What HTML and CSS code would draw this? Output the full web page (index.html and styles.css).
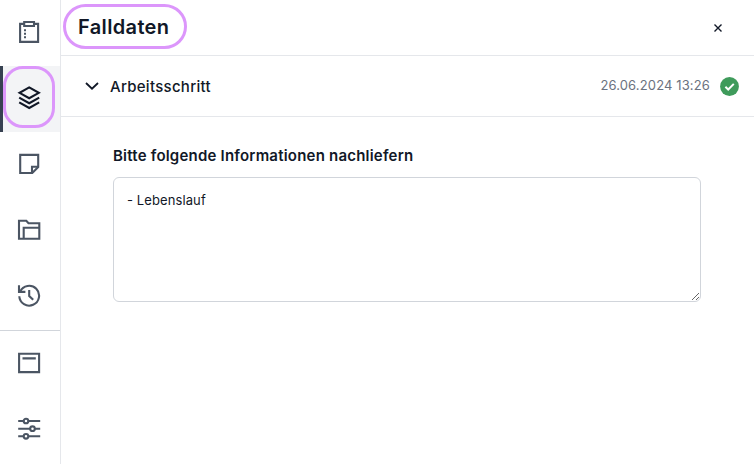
FILE: index.html
```html
<!DOCTYPE html>
<html lang="de">
<head>
    <meta charset="UTF-8" />
    <title>Falldaten</title>
    <link rel="stylesheet" href="styles.css">
</head>
<body>
<div class="app">
    <nav class="sidebar">
        <a class="nav-item" title="Aufgaben">
            <svg viewBox="0 0 24 24">
                <path d="M7 3.9H3.1v18h18V3.9H17" />
                <path d="M7.2 2h9.8v4H7.2z" />
                <path d="M7 10.3h2M7 13.8h2M7 17.3h2" />
            </svg>
        </a>
        <a class="nav-item active" title="Falldaten">
            <svg viewBox="0 0 24 24">
                <path d="M12.2 1.4L21.8 6.8L12.2 12.2L2.6 6.8z" />
                <path d="M2.2 11.6L12.2 17.2L22.2 11.6M2.2 16.4L12.2 22L22.2 16.4" />
            </svg>
            <span class="highlight highlight-nav"></span>
        </a>
        <a class="nav-item" title="Notizen">
            <svg viewBox="0 0 24 24">
                <path d="M3.2 2.9h18v12.2l-5.9 5.9H3.2z" />
                <path d="M15 21v-6.2h6.2" />
            </svg>
        </a>
        <a class="nav-item" title="Dokumente">
            <svg viewBox="0 0 24 24">
                <path d="M2 20.8V2.8h7.3l2.2 2.5H22.3v15.5z" />
                <path d="M6.7 20.8V9.8h15.6" />
            </svg>
        </a>
        <a class="nav-item" title="Verlauf">
            <svg viewBox="0 0 24 24">
                <path d="M2.3 12.2A9.9 9.9 0 1 0 3.2 7.6" />
                <path d="M2 1.3v6.6h6.4M12.2 6v6l4 3.8" />
            </svg>
        </a>
        <div class="divider"></div>
        <a class="nav-item" title="Ansicht">
            <svg viewBox="0 0 24 24">
                <path d="M2.1 2.8h20v18.3h-20zM5.5 7.4h13.3" />
            </svg>
        </a>
        <a class="nav-item" title="Einstellungen">
            <svg viewBox="0 0 24 24">
                <path d="M1.2 4h5.4M11.4 4h11.8M1.2 11.7h11.9M17.9 11.7h5.3M1.2 19.3h5.4M11.4 19.3h11.8" />
                <circle cx="9" cy="4" r="2.3" />
                <circle cx="15.5" cy="11.7" r="2.3" />
                <circle cx="9" cy="19.3" r="2.3" />
            </svg>
        </a>
    </nav>

    <main class="panel">
        <header class="panel-header">
            <h1>Falldaten<span class="highlight highlight-title"></span></h1>
            <button class="close" aria-label="Schließen">
                <svg viewBox="0 0 10 10"><path d="M1.5 1.5l7 7M8.5 1.5l-7 7" /></svg>
            </button>
        </header>

        <div class="step">
            <svg class="chevron" viewBox="0 0 14 8"><path d="M1 1l6 5.7L13 1" /></svg>
            <span class="step-title">Arbeitsschritt</span>
            <span class="step-date">26.06.2024 13:26</span>
            <svg class="check" viewBox="0 0 19 19">
                <circle cx="9.5" cy="9.5" r="9.4" />
                <path d="M5.4 9.8l2.8 2.7 5.6-5.6" />
            </svg>
        </div>

        <form class="step-form">
            <label for="nachliefern">Bitte folgende Informationen nachliefern</label>
            <textarea id="nachliefern" spellcheck="false">- Lebenslauf</textarea>
        </form>
    </main>
</div>
</body>
</html>
```
FILE: styles.css
```css
* {
    box-sizing: border-box;
}

body {
    margin: 0;
    font-family: Inter, "Liberation Sans", sans-serif;
    background-color: #ffffff;
    color: #111827;
}

svg {
    display: block;
    fill: none;
    stroke: currentColor;
}

.app {
    display: flex;
    height: 100vh;
    overflow: hidden;
}

.sidebar {
    flex: none;
    width: 61px;
    border-right: 1px solid #e5e7eb;
    color: #4b5563;
}

.nav-item {
    position: relative;
    display: flex;
    height: 66px;
    padding: 20px 0 0 14px;
    border-left: 3px solid transparent;
}

.nav-item svg {
    width: 24px;
    height: 24px;
    stroke-width: 2.1;
}

.nav-item.active {
    background-color: #f3f4f6;
    border-left-color: #374151;
    color: #111827;
}

.divider {
    height: 1px;
    background-color: #d1d5db;
}

.highlight {
    position: absolute;
    border: 3px solid #dc96fb;
}

.highlight-nav {
    left: 0;
    top: 0;
    width: 52px;
    height: 62px;
    border-radius: 20px;
}

.highlight-title {
    left: -15px;
    top: -9px;
    width: 124px;
    height: 45px;
    border-radius: 23px;
}

.panel {
    flex: 1;
}

.panel-header {
    display: flex;
    justify-content: space-between;
    align-items: center;
    height: 56px;
    padding: 0 31px 0 17px;
    border-bottom: 1px solid #e5e7eb;
}

h1 {
    position: relative;
    margin: 0 0 2px;
    font-size: 20px;
    line-height: 28px;
    font-weight: 600;
    letter-spacing: 0.35px;
}

.close {
    padding: 0;
    border: none;
    background: none;
    color: #111827;
    cursor: pointer;
}

.close svg {
    width: 10px;
    height: 10px;
    stroke-width: 1.4;
}

.step {
    display: flex;
    align-items: center;
    height: 61px;
    padding: 0 15px 0 24px;
    border-bottom: 1px solid #e5e7eb;
}

.chevron {
    width: 14px;
    height: 8px;
    margin-right: 11px;
    stroke-width: 1.8;
}

.step-title {
    flex: 1;
    font-size: 15px;
    font-weight: 500;
    letter-spacing: 0.28px;
}

.step-date {
    margin: 0 10px 2px 0;
    font-size: 13px;
    letter-spacing: 0.13px;
    color: #6b7280;
}

.check {
    width: 19px;
    height: 19px;
    stroke: #ffffff;
    stroke-width: 2;
}

.check circle {
    fill: #3f9b5b;
    stroke: none;
}

.step-form {
    padding: 27px 53px 0 52px;
}

.step-form label {
    display: block;
    margin-bottom: 10px;
    font-size: 15px;
    line-height: 23px;
    font-weight: 600;
    letter-spacing: 0.21px;
}

textarea {
    display: block;
    width: 100%;
    height: 125px;
    padding: 12px 13px;
    border: 1px solid #d1d5db;
    border-radius: 6px;
    font-family: inherit;
    font-size: 13px;
    line-height: 20px;
    letter-spacing: 0.1px;
    color: #111827;
}
```
